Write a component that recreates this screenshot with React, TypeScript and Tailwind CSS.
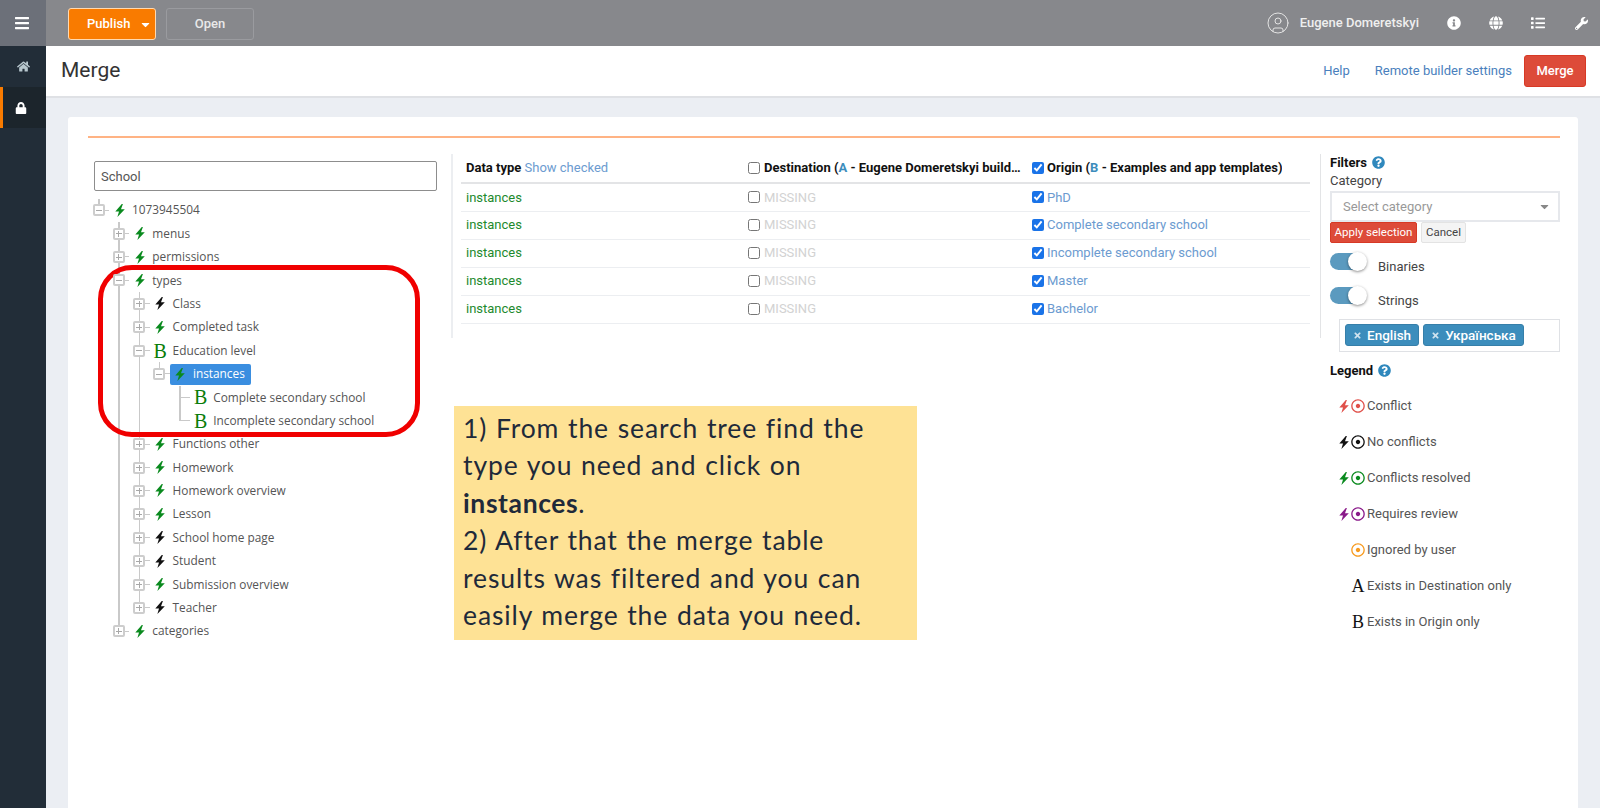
import { CircleUser } from "lucide-react";
import {
  FaBars,
  FaCaretDown,
  FaGlobe,
  FaHome,
  FaInfoCircle,
  FaList,
  FaLock,
  FaQuestionCircle,
  FaRegDotCircle,
  FaTimes,
  FaWrench,
} from "react-icons/fa";

type TreeItem = {
  label: string;
  icon: "green" | "black" | "b" | "leaf";
  open?: boolean;
  selected?: boolean;
  children?: TreeItem[];
};

const tree: TreeItem = {
  label: "1073945504",
  icon: "green",
  open: true,
  children: [
    { label: "menus", icon: "green", children: [] },
    { label: "permissions", icon: "green", children: [] },
    {
      label: "types",
      icon: "green",
      open: true,
      children: [
        { label: "Class", icon: "black", children: [] },
        { label: "Completed task", icon: "green", children: [] },
        {
          label: "Education level",
          icon: "b",
          open: true,
          children: [
            {
              label: "instances",
              icon: "green",
              open: true,
              selected: true,
              children: [
                { label: "Complete secondary school", icon: "b" },
                { label: "Incomplete secondary school", icon: "b" },
              ],
            },
          ],
        },
        { label: "Functions other", icon: "green", children: [] },
        { label: "Homework", icon: "green", children: [] },
        { label: "Homework overview", icon: "green", children: [] },
        { label: "Lesson", icon: "green", children: [] },
        { label: "School home page", icon: "black", children: [] },
        { label: "Student", icon: "black", children: [] },
        { label: "Submission overview", icon: "green", children: [] },
        { label: "Teacher", icon: "black", children: [] },
      ],
    },
    { label: "categories", icon: "green", children: [] },
  ],
};

const rows = ["PhD", "Complete secondary school", "Incomplete secondary school", "Master", "Bachelor"];

function Bolt({ className }: { className: string }) {
  return (
    <svg viewBox="0 0 10 13" className={`w-[10px] h-[13px] fill-current ${className}`}>
      <path d="M6.8 0 0.3 7.6H4L2.4 13 9.8 5.2H6L7.9 0Z" />
    </svg>
  );
}

function Expander({ open }: { open?: boolean }) {
  return (
    <span className="relative z-10 flex items-center justify-center w-[12px] h-[12px] border-2 border-[#cdcdcd] rounded-[2px] bg-white">
      <span className="w-[6px] h-px bg-[#a8a8a8]" />
      {!open && <span className="absolute w-px h-[6px] bg-[#a8a8a8]" />}
    </span>
  );
}

function TreeNode({ item, last }: { item: TreeItem; last: boolean }) {
  const isLeaf = !item.children;
  const iconEl =
    item.icon === "b" ? (
      <span className="font-['Liberation_Serif',serif] text-[20px] leading-none font-normal text-[#0a7d0a]">B</span>
    ) : (
      <Bolt className={item.icon === "black" ? "text-[#111]" : "text-[#0a8a1e]"} />
    );

  return (
    <li className="relative">
      <span className={`absolute left-[10px] top-0 w-[1.5px] bg-[#c9c9c9] ${last ? "h-[11.6px]" : "h-full"}`} />
      <div className="flex items-center h-[23.4px]">
        <div className="relative flex items-center justify-center w-[21px] h-full">
          <span className="absolute left-[10px] right-0 top-[11px] h-px bg-[#c9c9c9]" />
          {!isLeaf && <Expander open={item.open} />}
        </div>
        <div
          className={`flex items-center h-[21px] pr-[6px] rounded-[2px] ${
            item.selected ? "bg-[#3a8ee0] text-white" : "text-[#555]"
          }`}
        >
          <span className="flex items-center justify-center w-[21px] mr-[2px]">{iconEl}</span>
          <span className="whitespace-nowrap">{item.label}</span>
        </div>
      </div>
      {item.open && item.children && (
        <ul className="pl-[20.3px]">
          {item.children.map((c, i) => (
            <TreeNode key={c.label} item={c} last={i === item.children!.length - 1} />
          ))}
        </ul>
      )}
    </li>
  );
}

function Toggle({ label, className }: { label: string; className: string }) {
  return (
    <div className={`flex ${className}`}>
      <div className="relative w-[37px] h-[19px] shrink-0">
        <div className="mt-[1px] h-[17px] w-[36px] rounded-full bg-[#5b9abf]" />
        <div className="absolute right-0 top-0 w-[19px] h-[19px] rounded-full bg-white shadow-[0_1px_3px_rgba(0,0,0,0.45)]" />
      </div>
      <span className="ml-[11px] mt-[7px] leading-[16px]">{label}</span>
    </div>
  );
}

function LegendRow({ bolt, circle, glyph, label }: { bolt?: string; circle?: string; glyph?: string; label: string }) {
  return (
    <div className="flex items-center h-[36px]">
      <span className="flex items-center justify-center w-[14px] ml-[7px]">{bolt && <Bolt className={bolt} />}</span>
      <span className="flex items-center justify-center w-[14px]">
        {circle && <FaRegDotCircle className={`text-[14px] ${circle}`} />}
        {glyph && <span className="font-['Liberation_Serif',serif] text-[18px] leading-none text-[#111]">{glyph}</span>}
      </span>
      <span className="ml-[2px] text-[#555]">{label}</span>
    </div>
  );
}

export default function App() {
  return (
    <div className="flex h-screen overflow-hidden bg-[#ebeef3] font-['Roboto',sans-serif] text-[13px] text-[#444]">
      <aside className="w-[46px] shrink-0 bg-[#222d38] text-white">
        <div className="flex items-center justify-center h-[46px] pr-[3px] bg-[#6c7079]">
          <FaBars className="text-[16px]" />
        </div>
        <div className="flex items-center justify-center h-[41px] text-[#b8c7ce]">
          <FaHome className="text-[13px]" />
        </div>
        <div className="flex items-center justify-center h-[41px] bg-[#1c252c] border-l-[3px] border-[#f97b00] pr-[7px]">
          <FaLock className="text-[12px]" />
        </div>
      </aside>

      <div className="relative flex flex-col flex-1 min-w-0">
        <header className="flex items-center h-[46px] bg-[#87888c] pl-[22px] pr-[12px] text-white">
          <button className="flex items-center h-[32px] w-[88px] mt-[2px] pl-[18px] rounded-[3px] bg-[#f97b00] border border-[#ffd9b0] font-medium">
            Publish
            <FaCaretDown className="ml-[9px] text-[13px]" />
          </button>
          <button className="h-[32px] w-[88px] mt-[2px] ml-[10px] rounded-[3px] border border-[#9a9b9f] text-[#e9e9e9] font-medium">
            Open
          </button>
          <CircleUser className="ml-auto w-[24px] h-[24px] text-[#e3e3e3]" strokeWidth={1} />
          <span className="ml-[10px] font-medium text-[#efefef]">Eugene Domeretskyi</span>
          <FaInfoCircle className="ml-[28px] text-[14px]" />
          <FaGlobe className="ml-[28px] text-[14px]" />
          <FaList className="ml-[28px] text-[14px]" />
          <FaWrench className="ml-[30px] text-[13px]" />
        </header>

        <div className="flex items-center h-[52px] shrink-0 bg-white border-b-2 border-[#dfe1e5] pl-[15px] pr-[14px]">
          <h1 className="text-[21px] text-[#333]">Merge</h1>
          <a className="ml-auto text-[#4a7fbd]">Help</a>
          <a className="ml-[25px] text-[#4a7fbd]">Remote builder settings</a>
          <button className="ml-[12px] w-[62px] h-[32px] rounded-[3px] bg-[#dd4b39] border border-[#d73925] text-white font-medium">
            Merge
          </button>
        </div>

        <main className="flex-1 mt-[19px] ml-[22px] mr-[22px] rounded-t-[3px] bg-white pl-[20px] pr-[18px] pt-[19px]">
          <div className="h-[2px] bg-[#ffb384]" />
          <div className="relative flex mt-[16px]">
            <section className="w-[363px] shrink-0">
              <input
                readOnly
                value="School"
                className="block ml-[6px] mt-[7px] w-[343px] h-[30px] px-[6px] border border-[#8d8d8d] rounded-[2px] text-[#555] outline-none"
              />
              <ul className="mt-[7.6px] font-['Open_Sans',sans-serif] text-[11.85px]">
                <TreeNode item={tree} last />
              </ul>
            </section>

            <section className="w-[869px] shrink-0 h-[184px] border-l-2 border-[#eceef1] pl-[8px] pr-[10px]">
              <table className="w-full table-fixed border-collapse">
                <colgroup>
                  <col className="w-[282px]" />
                  <col className="w-[284px]" />
                  <col />
                </colgroup>
                <thead>
                  <tr className="h-[29px] border-b-2 border-[#e3e4e6] text-left text-[#111]">
                    <th className="pl-[5px] font-bold">
                      Data type <span className="font-normal text-[#6c9bd0]">Show checked</span>
                    </th>
                    <th className="pl-[5px] font-bold">
                      <div className="flex items-center">
                        <input type="checkbox" readOnly className="shrink-0 w-[12px] h-[12px] mr-[4px] accent-[#1a73e8]" />
                        <span className="truncate max-w-[257px]">
                          Destination (<span className="text-[#3c8dbc]">A</span> - Eugene Domeretskyi builder)
                        </span>
                      </div>
                    </th>
                    <th className="pl-[5px] font-bold">
                      <div className="flex items-center">
                        <input type="checkbox" checked readOnly className="shrink-0 w-[12px] h-[12px] mr-[3px] accent-[#1a73e8]" />
                        <span className="truncate">
                          Origin (<span className="text-[#3c8dbc]">B</span> - Examples and app templates)
                        </span>
                      </div>
                    </th>
                  </tr>
                </thead>
                <tbody>
                  {rows.map((r) => (
                    <tr key={r} className="h-[28px] border-b border-[#eceef1]">
                      <td className="pl-[5px] text-[#1d8a2d]">instances</td>
                      <td className="pl-[5px] text-[#d2d2d2]">
                        <div className="flex items-center">
                          <input type="checkbox" readOnly className="shrink-0 w-[12px] h-[12px] mr-[4px]" />
                          MISSING
                        </div>
                      </td>
                      <td className="pl-[5px] text-[#6c9bd0]">
                        <div className="flex items-center">
                          <input type="checkbox" checked readOnly className="shrink-0 w-[12px] h-[12px] mr-[3px] accent-[#1a73e8]" />
                          {r}
                        </div>
                      </td>
                    </tr>
                  ))}
                </tbody>
              </table>
            </section>

            <section className="relative flex-1 pl-[10px]">
              <span className="absolute left-0 top-0 h-[184px] w-px bg-[#e3e4e6]" />
              <div className="flex items-center h-[17px] font-bold text-[#111]">
                Filters
                <FaQuestionCircle className="ml-[5px] text-[13px] text-[#2f88bd]" />
              </div>
              <div className="mt-[1px] leading-[18px]">Category</div>
              <div className="flex items-center justify-between h-[31px] mt-[1px] pl-[11px] pr-[7px] border-2 border-[#e6e8ec] text-[#999]">
                Select category
                <FaCaretDown className="text-[13px] text-[#888]" />
              </div>
              <div className="flex gap-[4px] text-[11.5px]">
                <button className="w-[87px] h-[21px] rounded-[2px] bg-[#dd4b39] border border-[#d73925] text-white">
                  Apply selection
                </button>
                <button className="w-[45px] h-[21px] rounded-[2px] bg-[#f4f4f4] border border-[#e3e3e3] text-[#444]">
                  Cancel
                </button>
              </div>
              <Toggle label="Binaries" className="mt-[9px]" />
              <Toggle label="Strings" className="mt-[11px]" />
              <div className="flex items-start gap-[4px] h-[33px] mt-[10px] ml-[9px] pl-[5px] pt-[4px] border border-[#dfe1e5] text-[13.5px]">
                <span className="flex items-center h-[22px] px-[7px] rounded-[3px] bg-[#3c8dbc] border border-[#367fa9] font-medium text-white">
                  <FaTimes className="mr-[5px] text-[9px] text-[#cfe3ef]" />
                  English
                </span>
                <span className="flex items-center h-[22px] px-[7px] rounded-[3px] bg-[#3c8dbc] border border-[#367fa9] font-medium text-white">
                  <FaTimes className="mr-[5px] text-[9px] text-[#cfe3ef]" />
                  Українська
                </span>
              </div>
              <div className="flex items-center h-[17px] mt-[10px] font-bold text-[#111]">
                Legend
                <FaQuestionCircle className="ml-[5px] text-[13px] text-[#2f88bd]" />
              </div>
              <div className="mt-[9px]">
                <LegendRow bolt="text-[#e0504a]" circle="text-[#e0504a]" label="Conflict" />
                <LegendRow bolt="text-[#111]" circle="text-[#111]" label="No conflicts" />
                <LegendRow bolt="text-[#0a8a1e]" circle="text-[#0a8a1e]" label="Conflicts resolved" />
                <LegendRow bolt="text-[#8a1a8a]" circle="text-[#8a1a8a]" label="Requires review" />
                <LegendRow circle="text-[#f79a1e]" label="Ignored by user" />
                <LegendRow glyph="A" label="Exists in Destination only" />
                <LegendRow glyph="B" label="Exists in Origin only" />
              </div>
            </section>

            <div className="absolute left-[10px] top-[111px] w-[322px] h-[172px] rounded-[34px] border-[5px] border-[#f00000]" />

            <div className="absolute left-[366px] top-[252px] w-[463px] h-[234px] bg-[#fee295] pl-[9px] pt-[4px] font-['Lato',sans-serif] text-[26.5px] leading-[37.4px] tracking-[0.9px] [word-spacing:1px] text-[#1f2a3a] whitespace-pre-line">
              1) From the search tree find the{"\n"}type you need and click on{"\n"}
              <b className="tracking-[0.6px]">instances</b>.{"\n"}2) After that the merge table{"\n"}results was filtered and you can{"\n"}easily merge the data you need.
            </div>
          </div>
        </main>
      </div>
    </div>
  );
}
